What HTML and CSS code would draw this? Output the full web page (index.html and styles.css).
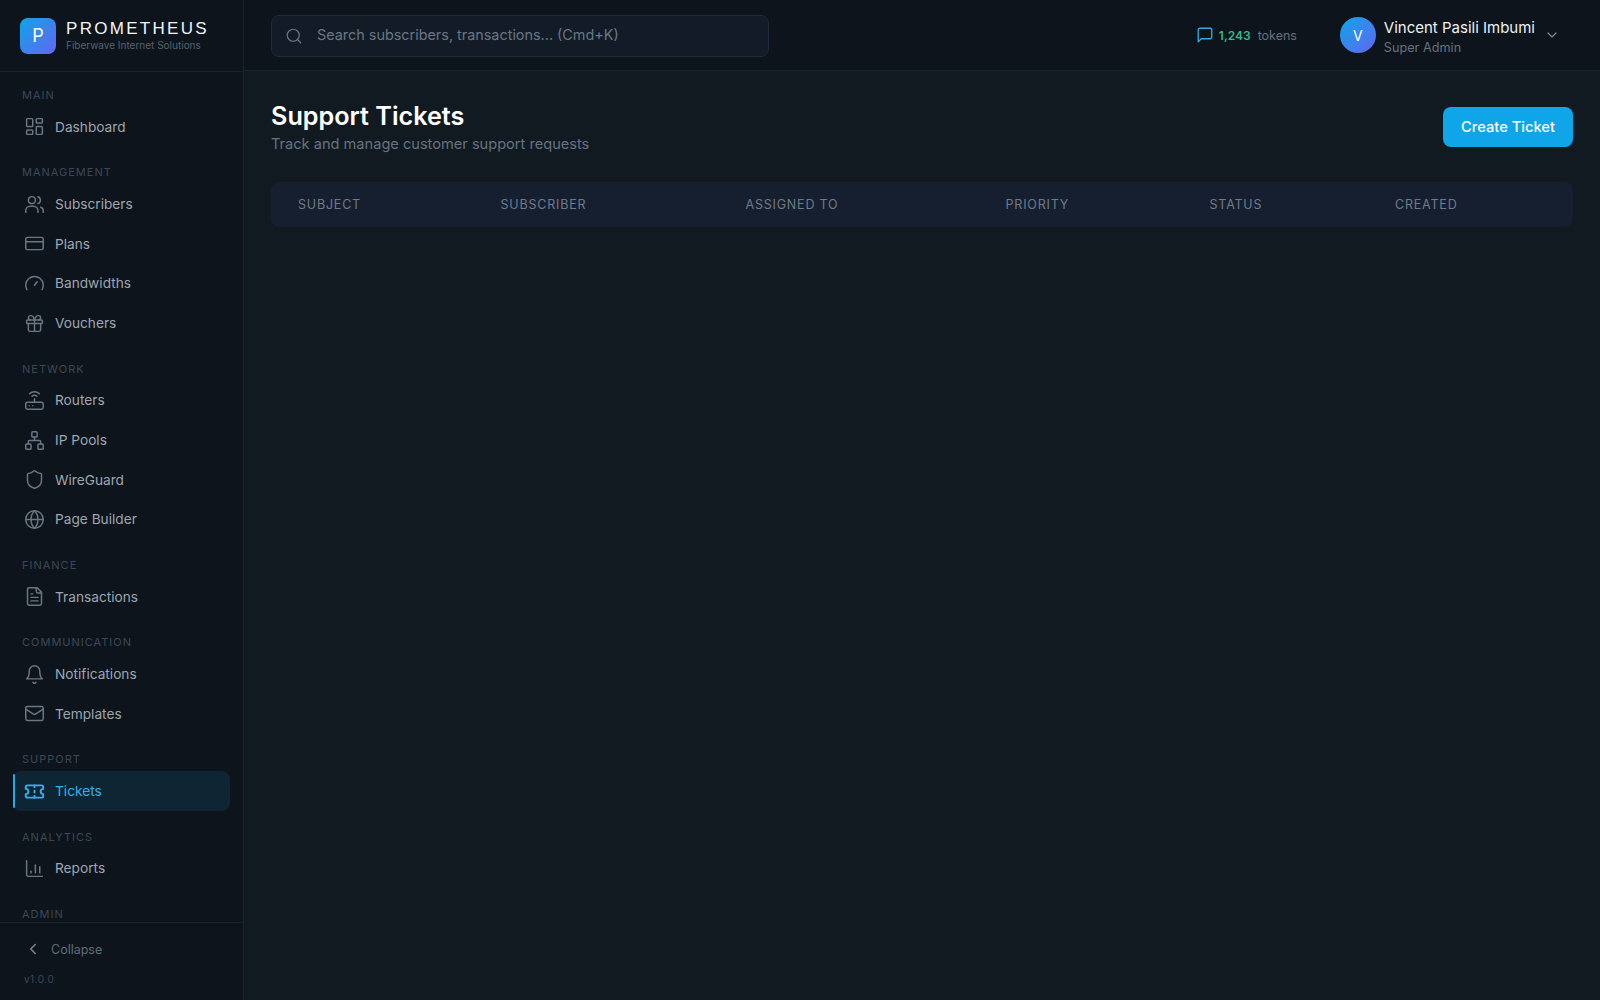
FILE: index.html
```html
<!DOCTYPE html>
<html lang="en">
<head>
<meta charset="utf-8">
<title>Support Tickets</title>
<link rel="stylesheet" href="styles.css">
</head>
<body>
<div class="app">
  <aside class="sidebar">
    <div class="brand">
      <div class="logo">P</div>
      <div class="brand-text">
        <div class="brand-name">PROMETHEUS</div>
        <div class="brand-sub">Fiberwave Internet Solutions</div>
      </div>
    </div>
    <nav class="nav">
      <div class="section">
        <div class="label">MAIN</div>
        <a class="item"><svg class="icon" viewBox="0 0 24 24"><rect x="3" y="3" width="7" height="9" rx="1"/><rect x="14" y="3" width="7" height="5" rx="1"/><rect x="14" y="12" width="7" height="9" rx="1"/><rect x="3" y="16" width="7" height="5" rx="1"/></svg>Dashboard</a>
      </div>
      <div class="section">
        <div class="label">MANAGEMENT</div>
        <a class="item"><svg class="icon" viewBox="0 0 24 24"><circle cx="9" cy="7" r="4"/><path d="M2 21v-2a5 5 0 0 1 5-5h4a5 5 0 0 1 5 5v2"/><path d="M16 3.2a4 4 0 0 1 0 7.6"/><path d="M22 21v-2a4 4 0 0 0-3-3.85"/></svg>Subscribers</a>
        <a class="item"><svg class="icon" viewBox="0 0 24 24"><rect x="2" y="5" width="20" height="14" rx="2"/><path d="M2 10h20"/></svg>Plans</a>
        <a class="item"><svg class="icon" viewBox="0 0 24 24"><path d="m12 14 3-4"/><path d="M3.34 19a10 10 0 1 1 17.32 0"/></svg>Bandwidths</a>
        <a class="item"><svg class="icon" viewBox="0 0 24 24"><rect x="3" y="8" width="18" height="4" rx="1"/><path d="M12 8v13"/><path d="M19 12v7a2 2 0 0 1-2 2H7a2 2 0 0 1-2-2v-7"/><path d="M7.5 8a2.5 2.5 0 0 1 0-5A4.8 8 0 0 1 12 8a4.8 8 0 0 1 4.5-5 2.5 2.5 0 0 1 0 5"/></svg>Vouchers</a>
      </div>
      <div class="section">
        <div class="label">NETWORK</div>
        <a class="item"><svg class="icon" viewBox="0 0 24 24"><rect x="2" y="14" width="20" height="8" rx="2"/><path d="M6.01 18H6"/><path d="M10.01 18H10"/><path d="M12 10v4"/><path d="M14.83 7.17a4 4 0 0 0-5.66 0"/><path d="M17.66 4.34a8 8 0 0 0-11.31 0"/></svg>Routers</a>
        <a class="item"><svg class="icon" viewBox="0 0 24 24"><rect x="16" y="16" width="6" height="6" rx="1"/><rect x="2" y="16" width="6" height="6" rx="1"/><rect x="9" y="2" width="6" height="6" rx="1"/><path d="M5 16v-3a1 1 0 0 1 1-1h12a1 1 0 0 1 1 1v3"/><path d="M12 12V8"/></svg>IP Pools</a>
        <a class="item"><svg class="icon" viewBox="0 0 24 24"><path d="M20 13c0 5-3.5 7.5-7.66 8.95a1 1 0 0 1-.67-.01C7.5 20.5 4 18 4 13V6a1 1 0 0 1 1-1c2 0 4.5-1.2 6.24-2.72a1.17 1.17 0 0 1 1.52 0C14.51 3.81 17 5 19 5a1 1 0 0 1 1 1z"/></svg>WireGuard</a>
        <a class="item"><svg class="icon" viewBox="0 0 24 24"><circle cx="12" cy="12" r="10"/><path d="M12 2a14.5 14.5 0 0 0 0 20 14.5 14.5 0 0 0 0-20"/><path d="M2 12h20"/></svg>Page Builder</a>
      </div>
      <div class="section">
        <div class="label">FINANCE</div>
        <a class="item"><svg class="icon" viewBox="0 0 24 24"><path d="M15 2H6a2 2 0 0 0-2 2v16a2 2 0 0 0 2 2h12a2 2 0 0 0 2-2V7Z"/><path d="M14 2v4a2 2 0 0 0 2 2h4"/><path d="M10 9H8"/><path d="M16 13H8"/><path d="M16 17H8"/></svg>Transactions</a>
      </div>
      <div class="section">
        <div class="label">COMMUNICATION</div>
        <a class="item"><svg class="icon" viewBox="0 0 24 24"><path d="M6 8a6 6 0 0 1 12 0c0 7 3 9 3 9H3s3-2 3-9"/><path d="M10.3 21a1.94 1.94 0 0 0 3.4 0"/></svg>Notifications</a>
        <a class="item"><svg class="icon" viewBox="0 0 24 24"><rect x="2" y="4" width="20" height="16" rx="2"/><path d="m22 7-8.97 5.7a1.94 1.94 0 0 1-2.06 0L2 7"/></svg>Templates</a>
      </div>
      <div class="section">
        <div class="label">SUPPORT</div>
        <a class="item active"><svg class="icon" viewBox="0 0 24 24"><path d="M2 9a3 3 0 0 1 0 6v2a2 2 0 0 0 2 2h16a2 2 0 0 0 2-2v-2a3 3 0 0 1 0-6V7a2 2 0 0 0-2-2H4a2 2 0 0 0-2 2Z"/><path d="M12 5v2"/><path d="M12 17v2"/><path d="M12 11v2"/></svg>Tickets</a>
      </div>
      <div class="section">
        <div class="label">ANALYTICS</div>
        <a class="item"><svg class="icon" viewBox="0 0 24 24"><path d="M3 3v16a2 2 0 0 0 2 2h16"/><path d="M8 17v-2"/><path d="M13 17V8"/><path d="M18 17v-7"/></svg>Reports</a>
      </div>
      <div class="section">
        <div class="label">ADMIN</div>
      </div>
    </nav>
    <div class="side-foot">
      <a class="collapse"><svg class="chev" viewBox="0 0 24 24"><path d="m15 18-6-6 6-6"/></svg>Collapse</a>
      <div class="version">v1.0.0</div>
    </div>
  </aside>
  <div class="content">
    <header class="topbar">
      <div class="search">
        <svg class="search-icon" viewBox="0 0 24 24"><circle cx="11" cy="11" r="8"/><path d="m21 21-4.3-4.3"/></svg>
        <span class="search-text">Search subscribers, transactions... (Cmd+K)</span>
      </div>
      <div class="top-right">
        <div class="tokens">
          <svg class="token-icon" viewBox="0 0 24 24"><path d="M21 15a2 2 0 0 1-2 2H7l-4 4V5a2 2 0 0 1 2-2h14a2 2 0 0 1 2 2z"/></svg>
          <span class="token-count">1,243</span>
          <span class="token-label">tokens</span>
        </div>
        <div class="user">
          <div class="avatar">V</div>
          <div class="user-text">
            <div class="user-name">Vincent Pasili Imbumi</div>
            <div class="user-role">Super Admin</div>
          </div>
          <svg class="user-chev" viewBox="0 0 24 24"><path d="m6 9 6 6 6-6"/></svg>
        </div>
      </div>
    </header>
    <main class="main">
      <div class="page-head">
        <div>
          <h1 class="title">Support Tickets</h1>
          <p class="subtitle">Track and manage customer support requests</p>
        </div>
        <button class="primary">Create Ticket</button>
      </div>
      <div class="table-head">
        <span>SUBJECT</span>
        <span>SUBSCRIBER</span>
        <span>ASSIGNED TO</span>
        <span>PRIORITY</span>
        <span>STATUS</span>
        <span>CREATED</span>
      </div>
    </main>
  </div>
</div>
</body>
</html>
```
FILE: styles.css
```css
* { box-sizing: border-box; }
html, body { margin: 0; height: 100%; }
body {
  font-family: "Inter", "Noto Sans", sans-serif;
  background: #111a21;
  color: #fff;
  overflow: hidden;
}
.app { display: flex; height: 1000px; }
.sidebar {
  width: 244px;
  flex: none;
  display: flex;
  flex-direction: column;
  background: #0d141b;
  border-right: 1px solid #18222b;
}
.brand {
  height: 72px;
  flex: none;
  display: flex;
  align-items: center;
  gap: 10px;
  padding-left: 20px;
  border-bottom: 1px solid #18222b;
}
.logo {
  width: 36px;
  height: 36px;
  border-radius: 8px;
  background: linear-gradient(135deg, #0ea5e9, #6366f1);
  display: flex;
  align-items: center;
  justify-content: center;
  font-size: 18px;
  color: #fff;
}
.brand-name {
  font-family: "Liberation Sans", sans-serif;
  font-size: 17px;
  line-height: 20px;
  letter-spacing: 2.3px;
  color: #f1f5f9;
}
.brand-sub {
  font-size: 10px;
  line-height: 13px;
  color: #566170;
}
.nav {
  flex: 1;
  overflow: hidden;
  padding: 15px 13px 0;
  display: flex;
  flex-direction: column;
  gap: 17.7px;
}
.section { display: flex; flex-direction: column; }
.label {
  font-size: 11px;
  line-height: 16px;
  letter-spacing: 1px;
  color: #3d4856;
  padding-left: 9px;
  margin-bottom: 4px;
}
.item {
  height: 39.67px;
  display: flex;
  align-items: center;
  gap: 10px;
  padding-left: 11px;
  font-size: 13.7px;
  color: #9da6b2;
  border-radius: 8px;
}
.icon {
  width: 21px;
  height: 21px;
  fill: none;
  stroke: #6b7684;
  stroke-width: 1.7;
  stroke-linecap: round;
  stroke-linejoin: round;
  flex: none;
}
.item.active {
  position: relative;
  background: #0e2634;
  color: #38aee8;
}
.item.active::before {
  content: "";
  position: absolute;
  left: 0;
  top: 3px;
  bottom: 3px;
  width: 2px;
  background: #2ba7e2;
  border-radius: 1px;
}
.item.active .icon { stroke: #38aee8; stroke-width: 2.2; }
.side-foot {
  flex: none;
  height: 78px;
  border-top: 1px solid #18222b;
  padding: 15px 0 0 24px;
}
.collapse {
  display: flex;
  align-items: center;
  gap: 9px;
  height: 22px;
  font-size: 12.5px;
  color: #5f6b7a;
}
.chev {
  width: 18px;
  height: 18px;
  fill: none;
  stroke: #7b8694;
  stroke-width: 2;
  stroke-linecap: round;
  stroke-linejoin: round;
  flex: none;
}
.version {
  margin-top: 12px;
  font-size: 10px;
  line-height: 14px;
  letter-spacing: .5px;
  color: #3d4856;
}
.content { flex: 1; min-width: 0; display: flex; flex-direction: column; }
.topbar {
  height: 71px;
  flex: none;
  display: flex;
  align-items: center;
  justify-content: space-between;
  padding: 1px 40px 0 27px;
  background: #0d141b;
  border-bottom: 1px solid #18242b;
}
.search {
  width: 498px;
  height: 42px;
  display: flex;
  align-items: center;
  gap: 14px;
  padding-left: 13px;
  background: #131c26;
  border: 1px solid #1e2a36;
  border-radius: 8px;
}
.search-icon {
  width: 18px;
  height: 18px;
  fill: none;
  stroke: #6b7684;
  stroke-width: 1.6;
  stroke-linecap: round;
  stroke-linejoin: round;
  flex: none;
}
.search-text { font-size: 14.4px; line-height: 18px; padding-bottom: 1px; color: #6b7684; }
.top-right { display: flex; align-items: center; margin-top: -1px; }
.tokens { display: flex; align-items: center; width: 144px; }
.token-icon {
  width: 18px;
  height: 18px;
  fill: none;
  stroke: #38a9d8;
  stroke-width: 1.8;
  stroke-linecap: round;
  stroke-linejoin: round;
  margin-right: 5px;
}
.token-count { font-size: 12px; font-weight: 600; color: #34b98a; margin-right: 7px; }
.token-label { font-size: 12.5px; color: #667282; }
.user { display: flex; align-items: center; }
.avatar {
  width: 36px;
  height: 36px;
  border-radius: 50%;
  background: linear-gradient(135deg, #0ea5e9, #6366f1);
  display: flex;
  align-items: center;
  justify-content: center;
  font-size: 14px;
  color: #fff;
  margin-right: 8px;
}
.user-text { padding-top: 5px; }
.user-name { font-size: 15px; line-height: 20px; color: #eef2f6; }
.user-role { font-size: 12.7px; line-height: 20px; color: #667282; }
.user-chev {
  width: 16px;
  height: 16px;
  fill: none;
  stroke: #7b8694;
  stroke-width: 1.8;
  stroke-linecap: round;
  stroke-linejoin: round;
  margin-left: 9px;
}
.main { flex: 1; padding: 28px 27px 0; }
.page-head { display: flex; justify-content: space-between; align-items: center; }
.title {
  margin: 0;
  font-size: 25.2px;
  line-height: 32px;
  padding-top: 1px;
  font-weight: 600;
  color: #fff;
}
.subtitle {
  margin: 1px 0 0;
  font-size: 14.6px;
  line-height: 22px;
  color: #667282;
}
.primary {
  width: 130px;
  height: 40px;
  border: 0;
  border-radius: 8px;
  background: #0ea5e9;
  color: #fff;
  font: 500 14.7px "Inter", sans-serif;
}
.table-head {
  margin-top: 27px;
  height: 45px;
  display: grid;
  grid-template-columns: 202.5px 245px 260px 204px 185.5px 1fr;
  align-items: center;
  padding-left: 27px;
  background: #151f30;
  border-radius: 8px;
  font-size: 12.5px;
  letter-spacing: .8px;
  color: #707b89;
}
```
